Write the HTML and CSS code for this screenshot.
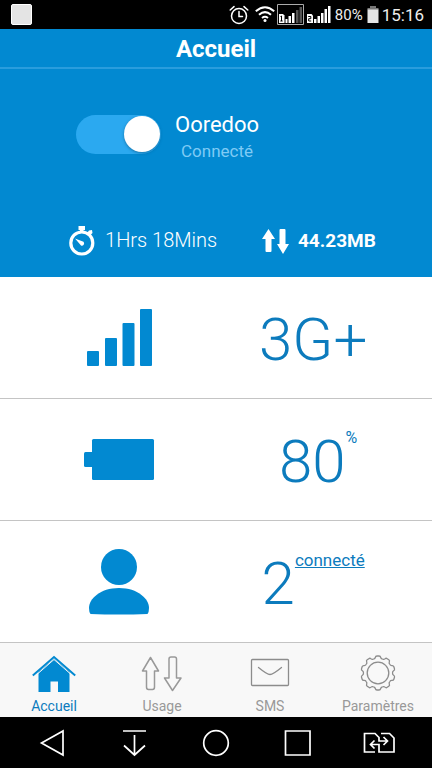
FILE: index.html
```html
<!DOCTYPE html>
<html lang="fr">
<head>
<meta charset="utf-8">
<meta name="viewport" content="width=device-width, initial-scale=1">
<title>Accueil</title>
<link rel="stylesheet" href="styles.css">
</head>
<body>
<div class="statusbar">
  <span class="notification"></span>
  <div class="indicators">
    <svg width="20" height="20" viewBox="0 0 20 20" fill="none" stroke="#fff" stroke-width="1.5" stroke-linecap="round"><circle cx="10" cy="11" r="7.5"/><path d="M10 6.5V11.5H13.5M1.2 5L5 1.6M15 1.6L18.8 5"/></svg>
    <svg class="wifi" width="20" height="20" viewBox="0 0 20 20" fill="none" stroke="#fff" stroke-width="2"><path d="M.8 6.200Q10-1.800 19.200 6.200M4 9.700Q10 4.600 16 9.700M7 13Q10 10.600 13 13"/><circle cx="10" cy="15.500" r="1.500" fill="#fff" stroke="none"/></svg>
    <svg width="27" height="21" viewBox="0 0 27 21"><path d="M.5.5H26.500V20.500H.5Z" fill="none" stroke="#aaa"/><path d="M2 10H6L7.500 11.500V19H2Z" fill="#fff"/><path d="M3.500 12.500L4.500 12V17M3.300 17H5.700" fill="none" stroke="#000"/><path d="M8.500 15H10.500V19H8.500ZM11.500 12H14V19H11.500ZM15 9H17.500V19H15Z" fill="#fff"/><path d="M19 6H21.500V19H19ZM22.500 3H25V19H22.500Z" fill="#555"/></svg>
    <svg class="sim" width="25" height="21" viewBox="0 0 25 21"><path d="M1 10H5.500L7 11.500V19H1Z" fill="#fff"/><path d="M2.200 12.500H4.800V14.700H2.700V17H5.200" fill="none" stroke="#000"/><path d="M8 15H10.500V19H8ZM11.500 12H14V19H11.500ZM15 9H17.500V19H15ZM18.500 5H21V19H18.500ZM22 2H24.500V19H22Z" fill="#fff"/></svg>
    <span class="charge">80%</span>
    <svg class="cell" width="12" height="19" viewBox="0 0 12 19"><path d="M3 1H9V3H11.500V5H.5V3H3Z" fill="#777"/><path d="M.5 4.500H11.500V18H.5Z" fill="#e5e5e5"/></svg>
    <time class="clock">15:16</time>
  </div>
</div>

<header class="titlebar"><h1>Accueil</h1></header>

<main>
  <section class="hero">
    <div class="network">
      <input class="switch" type="checkbox" id="data" checked>
      <label class="network-text" for="data">
        <span class="network-name">Ooredoo</span>
        <span class="network-state">Connecté</span>
      </label>
    </div>
    <div class="stats">
      <div class="stat duration">
        <svg width="26" height="30" viewBox="0 0 26 30"><path d="M9.500 0H16V4H14.500V6H11V4H9.500ZM20 4.500L23 4L23.500 7L21.500 9L18.500 6.500Z" fill="#fff"/><circle cx="12.800" cy="17" r="11" fill="none" stroke="#fff" stroke-width="3.200"/><path d="M6 12.500L14.500 15.800A2.300 2.300 0 0 1 12 19.500Z" fill="#fff"/></svg>
        <span>1Hrs 18Mins</span>
      </div>
      <div class="stat volume">
        <svg width="28" height="26" viewBox="0 0 28 26" fill="#fff"><path d="M6.500 1L13 11H9.500V23Q9.500 24 8.500 24H4.500Q3.500 24 3.500 23V11H0ZM18.500 1H22.500Q23.500 1 23.500 2V16H27L21 26L15 16H17.500V2Q17.500 1 18.500 1Z"/></svg>
        <span>44.23MB</span>
      </div>
    </div>
  </section>

  <section class="metric">
    <svg width="66" height="60" viewBox="0 0 66 60" fill="#0289d1"><rect x="1" y="43" width="12" height="15" rx="1"/><rect x="19" y="30" width="12" height="28" rx="1"/><rect x="36.500" y="15" width="12" height="43" rx="1"/><rect x="54" y="1" width="12" height="57" rx="1"/></svg>
    <p class="value">3G+</p>
  </section>
  <section class="metric">
    <svg width="72" height="42" viewBox="0 0 72 42" fill="#0289d1"><rect x="9" y="0" width="62" height="41" rx="1.500"/><rect x="1" y="13" width="10" height="15" rx="1.500"/></svg>
    <p class="value percent">80<sup class="unit">%</sup></p>
  </section>
  <section class="metric">
    <svg width="62" height="68" viewBox="0 0 62 68" fill="#0289d1"><circle cx="31" cy="19" r="18"/><path d="M31 40C50 40 61 51 61 60Q61 64 59.500 66Q31 67 2.500 66Q1 64 1 60C1 51 12 40 31 40Z"/></svg>
    <p class="value">2<a class="clients" href="#clients">connecté</a></p>
  </section>
</main>

<nav class="tabs">
  <a class="tab active" href="#accueil">
    <svg width="44" height="38" viewBox="0 0 44 38"><path d="M22 4L37.500 17V37H26V26.500H18.500V37H6.500V17Z" fill="#0289d1"/><path d="M.8 20.500L22 2L43.200 20.500" fill="none" stroke="#0289d1" stroke-width="2"/><path d="M2 22L22 4.500L42 22" fill="none" stroke="#f8f8f8" stroke-width="1"/></svg>
    <span>Accueil</span>
  </a>
  <a class="tab" href="#usage">
    <svg width="42" height="38" viewBox="0 0 42 38" fill="none" stroke="#999" stroke-width="1.500" stroke-linejoin="round"><path d="M9.500 2.500L17.500 16H13.500V32Q13.500 34.500 11.500 34.500H7.500Q5.500 34.500 5.500 32V16H1.500ZM30 2H33.500Q35.500 2 35.500 4V23H40L31.500 35.500L23.500 23H28V4Q28 2 30 2Z"/></svg>
    <span>Usage</span>
  </a>
  <a class="tab" href="#sms">
    <svg width="40" height="38" viewBox="0 0 40 38" fill="none" stroke="#8c8c8c" stroke-width="1.300"><rect x="1.500" y="4.500" width="37" height="26" rx="1"/><path d="M8.500 12.500Q17 19.500 20 19.500T31.500 12.500" stroke-linecap="round"/></svg>
    <span>SMS</span>
  </a>
  <a class="tab" href="#parametres">
    <svg width="38" height="38" viewBox="-19 -18 38 38" fill="none" stroke="#8c8c8c" stroke-width="1.300">
      <defs><path id="tooth" d="M-4.480-13.790C-3.400-14.140-2.900-14.600-2.700-15.500Q-2.400-17-1-17H1Q2.400-17 2.700-15.500C2.900-14.600 3.400-14.140 4.480-13.790"/></defs>
      <use href="#tooth"/><use href="#tooth" transform="rotate(36)"/><use href="#tooth" transform="rotate(72)"/><use href="#tooth" transform="rotate(108)"/><use href="#tooth" transform="rotate(144)"/><use href="#tooth" transform="rotate(180)"/><use href="#tooth" transform="rotate(216)"/><use href="#tooth" transform="rotate(252)"/><use href="#tooth" transform="rotate(288)"/><use href="#tooth" transform="rotate(324)"/>
      <circle r="10.800"/>
    </svg>
    <span>Paramètres</span>
  </a>
</nav>

<div class="softkeys">
  <button type="button" aria-label="Retour"><svg width="32" height="28" viewBox="0 0 32 28"><path d="M4.500 14L26 2V26Z"/></svg></button>
  <button type="button" aria-label="Notifications"><svg width="32" height="28" viewBox="0 0 32 28"><path d="M5 2H28M16.500 6V26M6 16.500L16.500 26L27 16.500"/></svg></button>
  <button type="button" aria-label="Accueil"><svg width="32" height="28" viewBox="0 0 32 28"><circle cx="16" cy="14" r="12.300"/></svg></button>
  <button type="button" aria-label="Applications"><svg width="32" height="28" viewBox="0 0 32 28"><path d="M3.500 2H28V26H3.500Z"/></svg></button>
  <button type="button" aria-label="Changer de SIM"><svg width="32" height="28" viewBox="0 0 32 28"><path d="M12 23H1.500V4.500H12L16 8.500V12H24M18 4.500H26.500L31 9V23H16V15.500H8M20.500 8L24.500 12L20.500 16M11.500 11.500L7.500 15.500L11.500 19.500"/></svg></button>
</div>
</body>
</html>
```

FILE: styles.css
```css
* {
  box-sizing: border-box;
}

body {
  margin: 0;
  min-height: 100vh;
  display: flex;
  flex-direction: column;
  background: #fff;
  color: #0c7bbd;
  font-family: Roboto, "Liberation Sans", sans-serif;
}

h1,
p {
  margin: 0;
}

a {
  color: inherit;
}

svg {
  display: block;
  flex: none;
}

.statusbar {
  display: flex;
  align-items: center;
  justify-content: space-between;
  height: 29px;
  padding: 0 8px 0 11px;
  background: #000;
  color: #eee;
}

.notification {
  width: 21px;
  height: 21px;
  border: 1px solid #fff;
  border-radius: 2px;
  background: #e4e4e4;
}

.indicators {
  display: flex;
  align-items: center;
}

.wifi {
  margin: 0 2px 0 6px;
}

.sim {
  margin: 0 4px 0 2px;
}

.charge {
  font-size: 15px;
}

.cell {
  margin: 0 3px 0 4px;
}

.clock {
  font-size: 17px;
}

.titlebar {
  height: 40px;
  border-bottom: 2px solid #2a9ddd;
  background: #0289d1;
  color: #fff;
  text-align: center;
}

.titlebar h1 {
  font-size: 24px;
  font-weight: 700;
  line-height: 40px;
}

main {
  flex: 1;
  display: flex;
  flex-direction: column;
}

.hero {
  padding: 37px 0 19px;
  background: #0289d1;
  color: #fff;
}

.network {
  display: flex;
  align-items: center;
  gap: 14px;
  padding-left: 76px;
}

.switch {
  appearance: none;
  width: 85px;
  height: 39px;
  margin: 0;
  padding: 1px;
  border-radius: 20px;
  background: #2ba9f0;
}

.switch::before {
  content: "";
  display: block;
  width: 36px;
  height: 36px;
  border-radius: 50%;
  background: #fff;
  box-shadow: 0 1px 3px #02406680;
}

.switch:checked::before {
  margin-left: auto;
}

.network-text {
  display: flex;
  flex-direction: column;
  align-items: center;
  padding-top: 5px;
}

.network-name {
  font-size: 22px;
  line-height: 28px;
}

.network-state {
  color: #7fcbf5;
  font-size: 17px;
  line-height: 24px;
}

.stats {
  display: flex;
  align-items: center;
  justify-content: space-between;
  margin-top: 60px;
  padding: 0 13% 0 16%;
}

.stat {
  display: flex;
  align-items: center;
  gap: 8px;
  font-size: 20px;
  line-height: 35px;
}

.duration {
  gap: 10px;
  font-weight: 300;
}

.volume {
  font-size: 19px;
  font-weight: 700;
}

.metric {
  flex: 1;
  display: grid;
  grid-template-columns: 55% 35%;
  align-items: center;
  justify-items: center;
  min-height: 121px;
  border-bottom: 1px solid #c4c4c4;
}

.value {
  display: flex;
  align-items: flex-start;
  padding-top: 5px;
  font-size: 60px;
  font-weight: 300;
  line-height: 72px;
}

.percent {
  padding-left: 10px;
}

.unit {
  font-size: 16px;
  font-weight: 400;
  line-height: 24px;
}

.clients {
  font-size: 17px;
  font-weight: 400;
  line-height: 24px;
}

.tabs {
  display: grid;
  grid-template-columns: repeat(4, 1fr);
  padding: 12px 0 2px;
  background: #f8f8f8;
}

.tab {
  display: flex;
  flex-direction: column;
  align-items: center;
  gap: 4px;
  color: #999;
  font-size: 14px;
  line-height: 18px;
  text-decoration: none;
}

.active {
  color: #0c7bbd;
}

.softkeys {
  display: grid;
  grid-template-columns: repeat(5, 1fr);
  height: 51px;
  padding: 0 12px;
  background: #000;
}

.softkeys button {
  display: flex;
  align-items: center;
  justify-content: center;
  padding: 0;
  border: 0;
  background: none;
}

.softkeys svg {
  fill: none;
  stroke: #fff;
  stroke-width: 1.7px;
}
```
